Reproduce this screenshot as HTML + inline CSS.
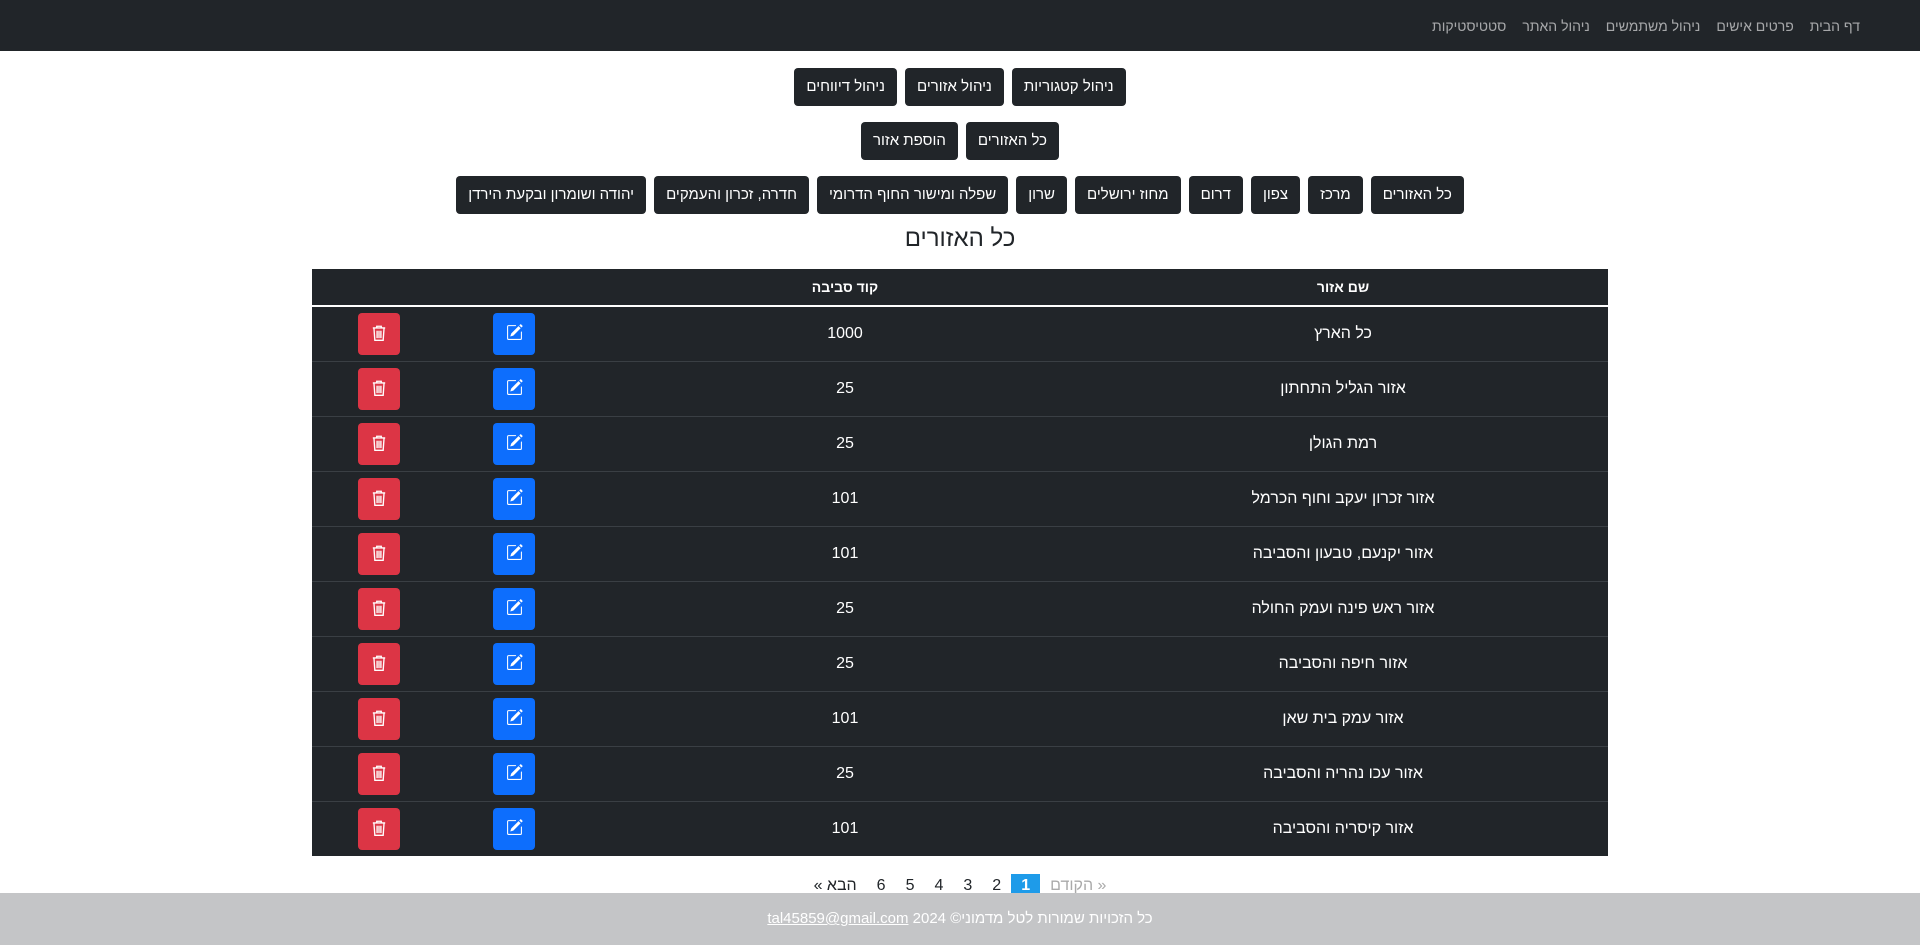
<!DOCTYPE html>
<html lang="he" dir="rtl"><head><meta charset="utf-8">
<style>
*{box-sizing:border-box}
body{margin:0;width:1920px;height:945px;overflow:hidden;background:#fff;font-family:"Liberation Sans","Noto Sans CJK SC",sans-serif;position:relative;color:#212529}
.nav{height:51px;background:#212529;display:flex;align-items:center;padding-right:52px}
.nav a{color:rgba(255,255,255,.6);font-size:14px;padding:0 8px;text-decoration:none}
.row{display:flex;justify-content:center;gap:8px;position:absolute;left:0;right:0}
.btn{background:#212529;color:#fff;font-size:15px;height:38px;line-height:38px;padding:0 12px;border-radius:4px;white-space:nowrap}
h4{position:absolute;left:0;right:0;top:223px;margin:0;text-align:center;font-weight:400;font-size:24px;line-height:32px}
table{position:absolute;left:312px;top:269px;width:1296px;border-collapse:collapse;table-layout:fixed;background:#212529;color:#fff;font-size:16px}
th{height:37px;font-size:14px;font-weight:700;border-bottom:2px solid #fff;text-align:center}
td{height:55px;text-align:center;border-top:1px solid #3a3f44;padding:0}
tr:first-child td{border-top:none}
td.c3{padding-right:30px}
.ib{display:inline-block;width:42px;height:42px;border-radius:4px;vertical-align:middle;padding-top:11px}
.e{background:#0d6efd}.d{background:#dc3545}
.pg{position:absolute;top:874px;left:0;right:0;display:flex;justify-content:center;font-size:16px;direction:rtl}
.pg span{padding:0 10px;height:22px;line-height:24px}
.foot{position:absolute;left:0;right:0;top:893px;height:52px;background:#c4c5c7;color:#fff;text-align:center;line-height:52px;font-size:15px}
.foot u{color:#fff}
</style></head><body>
<div class="nav"><a>דף הבית</a><a>פרטים אישים</a><a>ניהול משתמשים</a><a>ניהול האתר</a><a>סטטיסטיקות</a></div>
<div class="row" style="top:68px"><div class="btn">ניהול קטגוריות</div><div class="btn">ניהול אזורים</div><div class="btn">ניהול דיווחים</div></div>
<div class="row" style="top:122px"><div class="btn">כל האזורים</div><div class="btn">הוספת אזור</div></div>
<div class="row" style="top:176px"><div class="btn">כל האזורים</div><div class="btn">מרכז</div><div class="btn">צפון</div><div class="btn">דרום</div><div class="btn">מחוז ירושלים</div><div class="btn">שרון</div><div class="btn">שפלה ומישור החוף הדרומי</div><div class="btn">חדרה, זכרון והעמקים</div><div class="btn">יהודה ושומרון ובקעת הירדן</div></div>
<h4>כל האזורים</h4>
<table>
<colgroup><col style="width:530px"><col style="width:466px"><col style="width:166px"><col style="width:134px"></colgroup>
<thead><tr><th>שם אזור</th><th>קוד סביבה</th><th></th><th></th></tr></thead>
<tbody id="tb"></tbody>
</table>
<div class="pg"><span style="color:#aaa">« הקודם</span><span style="background:#1e9be9;color:#fff;font-weight:700">1</span><span>2</span><span>3</span><span>4</span><span>5</span><span>6</span><span>הבא »</span></div>
<div class="foot">כל הזכויות שמורות לטל מדמוני© 2024 <u>tal45859@gmail.com</u></div>
<script>
var d=[["כל הארץ","1000"],["אזור הגליל התחתון","25"],["רמת הגולן","25"],["אזור זכרון יעקב וחוף הכרמל","101"],["אזור יקנעם, טבעון והסביבה","101"],["אזור ראש פינה ועמק החולה","25"],["אזור חיפה והסביבה","25"],["אזור עמק בית שאן","101"],["אזור עכו נהריה והסביבה","25"],["אזור קיסריה והסביבה","101"]];
var ed='<svg width="17" height="17" viewBox="0 0 16 16" fill="#fff"><path d="M15.5 1.6a.5.5 0 0 1 0 .7l-1 1-2-2 1-1a.5.5 0 0 1 .7 0l1.3 1.3zM13.8 4 11.8 2 5 8.8a.5.5 0 0 0-.1.2l-.8 2.4a.25.25 0 0 0 .3.3l2.4-.8a.5.5 0 0 0 .2-.1L13.8 4z"/><path fill-rule="evenodd" d="M1 13.5A1.5 1.5 0 0 0 2.5 15h11a1.5 1.5 0 0 0 1.5-1.5v-6a.5.5 0 0 0-1 0v6a.5.5 0 0 1-.5.5h-11a.5.5 0 0 1-.5-.5v-11a.5.5 0 0 1 .5-.5H9a.5.5 0 0 0 0-1H2.5A1.5 1.5 0 0 0 1 2.5v11z"/></svg>';
var tr='<svg width="18" height="18" viewBox="0 0 16 16" fill="none" stroke="#fff" stroke-width="1.2"><path d="M2.5 3.5h11M6 3.5V2h4v1.5M3.5 3.5l.8 11h7.4l.8-11M6.3 6v6.5M8 6v6.5M9.7 6v6.5"/></svg>';
var h='';d.forEach(function(r){h+='<tr><td>'+r[0]+'</td><td>'+r[1]+'</td><td class="c3"><span class="ib e">'+ed+'</span></td><td><span class="ib d">'+tr+'</span></td></tr>'});
document.getElementById('tb').innerHTML=h;
</script>
</body></html>
